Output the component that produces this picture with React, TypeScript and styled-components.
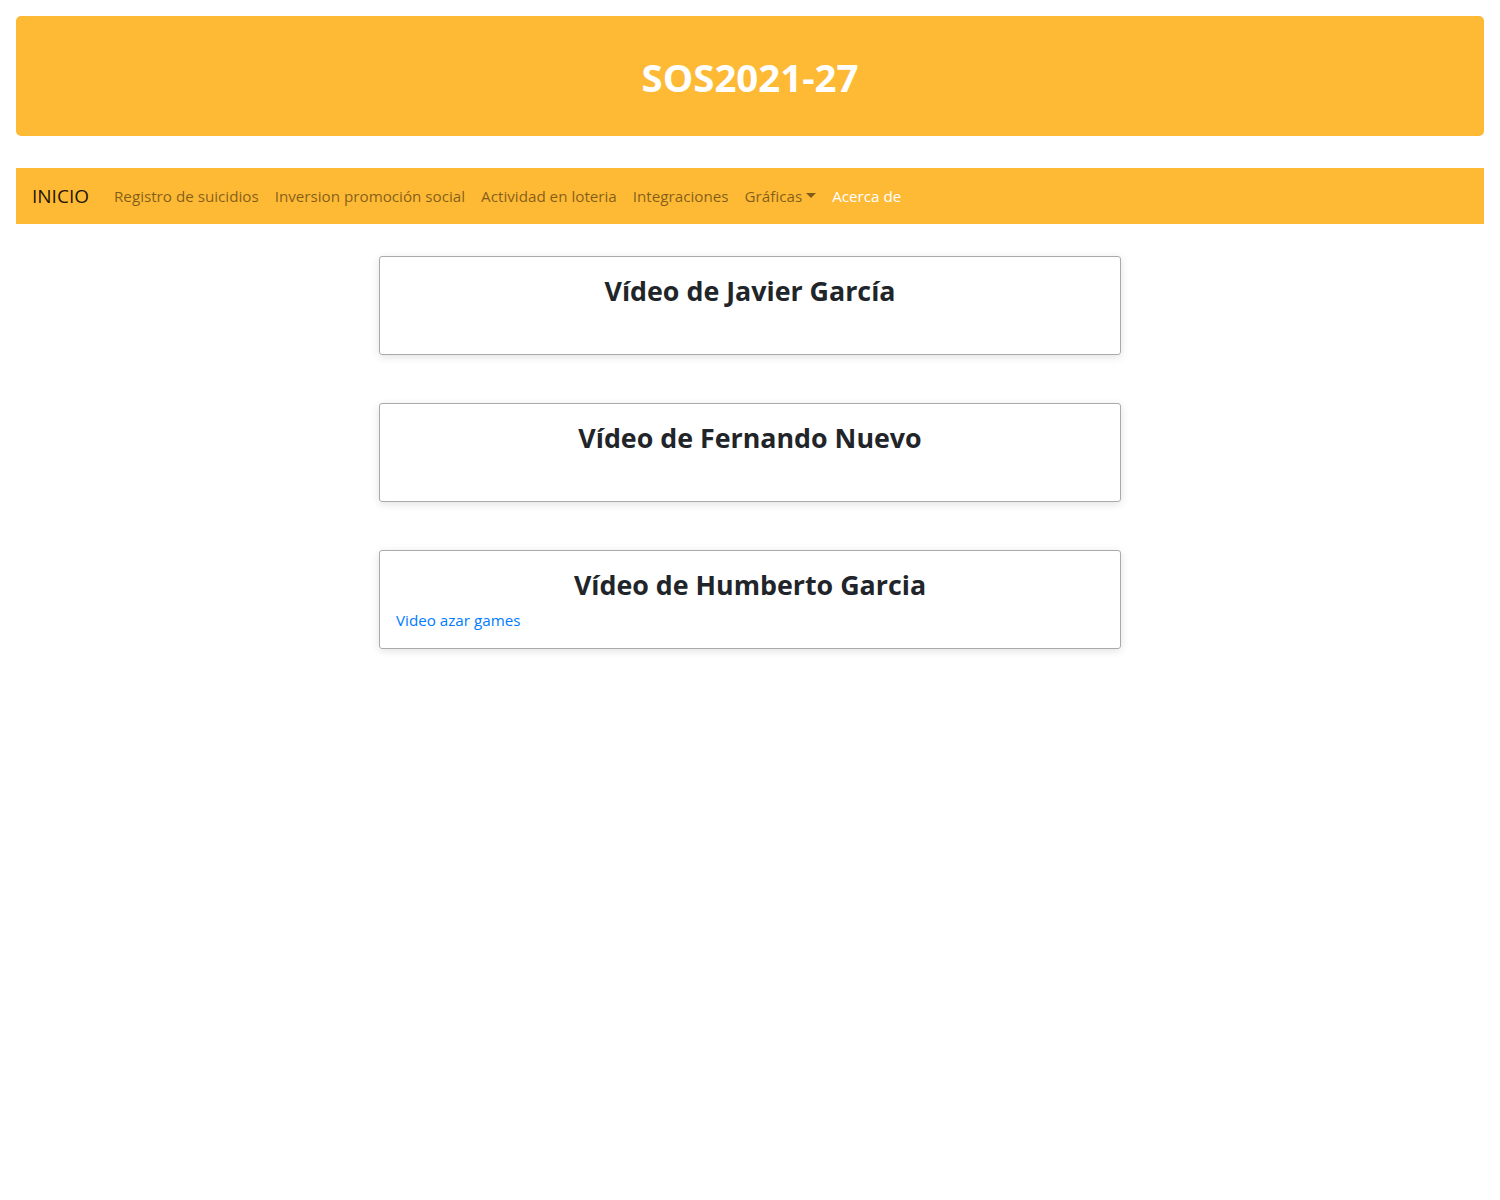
import React from "react";
import styled, { createGlobalStyle } from "styled-components";

const GlobalStyle = createGlobalStyle`
  html, body { margin: 0; padding: 0; background: #fff; }
  body {
    font-family: "Segoe UI", "Open Sans", "Noto Sans", sans-serif;
    font-size: 15.2px;
    line-height: 24px;
    color: #212529;
  }
  * { box-sizing: border-box; }
`;

const Page = styled.main`
  padding: 16px;
  display: flex;
  flex-direction: column;
`;

const Jumbotron = styled.header`
  background: #feb935;
  border-radius: 5px;
  height: 120px;
  display: flex;
  align-items: center;
  justify-content: center;
  margin-bottom: 32px;
`;

const SiteTitle = styled.h1`
  margin: 0;
  color: #fff;
  font-size: 38.4px;
  font-weight: 700;
  line-height: 48px;
  padding-top: 2px;
`;

const NavBar = styled.nav`
  background: #feb935;
  height: 56px;
  padding: 8px 16px;
  display: flex;
  align-items: center;
`;

const Brand = styled.a`
  font-size: 19px;
  line-height: 30px;
  color: rgba(0, 0, 0, 0.9);
  margin-right: 17px;
  text-decoration: none;
`;

const NavList = styled.ul`
  list-style: none;
  display: flex;
  margin: 0;
  padding: 0;
`;

const NavLink = styled.a<{ $active?: boolean }>`
  display: flex;
  align-items: center;
  padding: 8px;
  color: ${(p) => (p.$active ? "#fff" : "rgba(0, 0, 0, 0.5)")};
  text-decoration: none;
`;

const Caret = styled.span`
  display: inline-block;
  margin-left: 4px;
  border-top: 5px solid currentColor;
  border-left: 5px solid transparent;
  border-right: 5px solid transparent;
  transform: translateY(-1px);
`;

const Cards = styled.section`
  width: 742px;
  margin: 32px auto 0;
  display: flex;
  flex-direction: column;
  gap: 48px;
`;

const Card = styled.article`
  border: 1px solid #aaa;
  border-radius: 3px;
  box-shadow: 0 2px 8px rgba(0, 0, 0, 0.12);
  padding: 16px;
`;

const CardTitle = styled.h3`
  margin: 0 0 7px;
  font-size: 26.8px;
  font-weight: 700;
  line-height: 33px;
  text-align: center;
  color: #212529;
  padding-top: 1px;
`;

const CardBody = styled.div`
  min-height: 24px;
`;

const VideoLink = styled.a`
  color: #007bff;
  text-decoration: none;
`;

const navItems = [
  "Registro de suicidios",
  "Inversion promoción social",
  "Actividad en loteria",
  "Integraciones",
];

const videos = [
  { name: "Vídeo de Javier García" },
  { name: "Vídeo de Fernando Nuevo" },
  { name: "Vídeo de Humberto Garcia", link: "Video azar games" },
];

export default function App() {
  return (
    <>
      <GlobalStyle />
      <Page>
        <Jumbotron>
          <SiteTitle>SOS2021-27</SiteTitle>
        </Jumbotron>
        <NavBar>
          <Brand href="#">INICIO</Brand>
          <NavList>
            {navItems.map((t) => (
              <li key={t}>
                <NavLink href="#">{t}</NavLink>
              </li>
            ))}
            <li>
              <NavLink href="#">
                Gráficas
                <Caret />
              </NavLink>
            </li>
            <li>
              <NavLink href="#" $active>
                Acerca de
              </NavLink>
            </li>
          </NavList>
        </NavBar>
        <Cards>
          {videos.map((v) => (
            <Card key={v.name}>
              <CardTitle>{v.name}</CardTitle>
              <CardBody>
                {v.link && <VideoLink href="#">{v.link}</VideoLink>}
              </CardBody>
            </Card>
          ))}
        </Cards>
      </Page>
    </>
  );
}
